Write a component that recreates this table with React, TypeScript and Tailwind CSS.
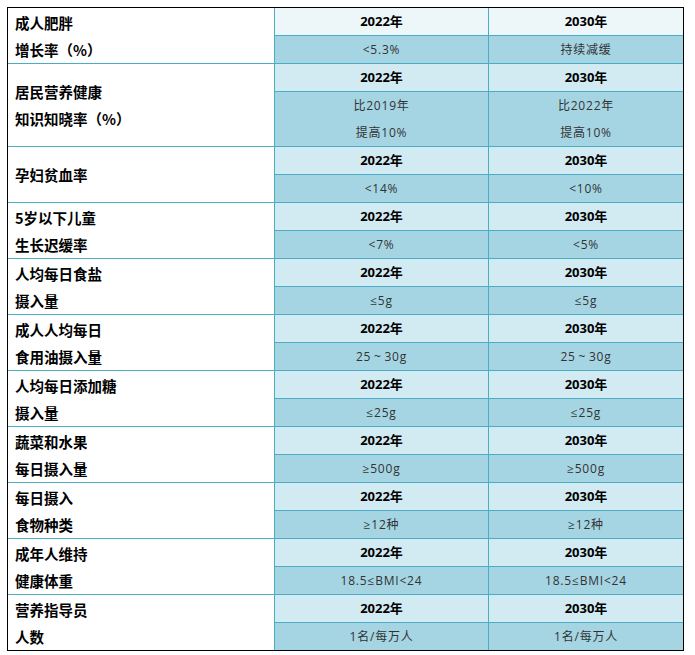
import React from "react";

interface Group {
  label: string[];
  a: string[];
  b: string[];
  tall?: boolean;
}

const OIL = "25\u2009~\u200930g";

const GROUPS: Group[] = [
  { label: ["成人肥胖", "增长率（%）"], a: ["<5.3%"], b: ["持续减缓"] },
  {
    label: ["居民营养健康", "知识知晓率（%）"],
    a: ["比2019年", "提高10%"],
    b: ["比2022年", "提高10%"],
    tall: true,
  },
  { label: ["孕妇贫血率"], a: ["<14%"], b: ["<10%"] },
  { label: ["5岁以下儿童", "生长迟缓率"], a: ["<7%"], b: ["<5%"] },
  { label: ["人均每日食盐", "摄入量"], a: ["≤5g"], b: ["≤5g"] },
  { label: ["成人人均每日", "食用油摄入量"], a: [OIL], b: [OIL] },
  { label: ["人均每日添加糖", "摄入量"], a: ["≤25g"], b: ["≤25g"] },
  { label: ["蔬菜和水果", "每日摄入量"], a: ["≥500g"], b: ["≥500g"] },
  { label: ["每日摄入", "食物种类"], a: ["≥12种"], b: ["≥12种"] },
  { label: ["成年人维持", "健康体重"], a: ["18.5≤BMI<24"], b: ["18.5≤BMI<24"] },
  { label: ["营养指导员", "人数"], a: ["1名/每万人"], b: ["1名/每万人"] },
];

const CJK = { fontFamily: '"Noto Sans CJK SC", "Noto Sans", sans-serif' };
const LATIN = { fontFamily: '"Open Sans", "Noto Sans CJK SC", sans-serif' };

export default function App() {
  return (
    <div className="min-h-[655px] w-[695px] bg-white pl-[7px] pt-[7px]" style={CJK}>
      <div className="w-[677px] border border-black">
        {GROUPS.map((g, i) => (
          <div
            key={g.label[0]}
            className={`flex ${i > 0 ? "border-t border-[#4bacc6]" : ""}`}
          >
            <div className="flex w-[267px] shrink-0 flex-col justify-center border-r border-[#4bacc6] pl-[7px] text-[14.5px] font-bold text-black">
              {g.label.map((l) => (
                <div key={l} className="h-[27px] leading-[27px]">
                  {l}
                </div>
              ))}
            </div>
            <div className="flex flex-1 flex-col" style={LATIN}>
              <div
                className={`flex h-[28px] border-b border-[#4bacc6] text-[13px] font-bold text-black ${
                  i === 0 ? "bg-[#edf6f9]" : "bg-[#d2eaf2]"
                }`}
              >
                <div className="flex w-[214px] items-center justify-center border-r border-[#4bacc6]">
                  2022年
                </div>
                <div className="flex flex-1 items-center justify-center">2030年</div>
              </div>
              <div
                className={`flex bg-[#a5d5e3] text-[12px] tracking-[0.8px] text-[#333333] ${
                  g.tall ? "h-[54px]" : "h-[27px]"
                }`}
              >
                <div className="flex w-[214px] flex-col items-center justify-center border-r border-[#4bacc6]">
                  {g.a.map((t) => (
                    <div key={t} className="h-[27px] leading-[27px]">
                      {t}
                    </div>
                  ))}
                </div>
                <div className="flex flex-1 flex-col items-center justify-center">
                  {g.b.map((t) => (
                    <div key={t} className="h-[27px] leading-[27px]">
                      {t}
                    </div>
                  ))}
                </div>
              </div>
            </div>
          </div>
        ))}
      </div>
    </div>
  );
}
